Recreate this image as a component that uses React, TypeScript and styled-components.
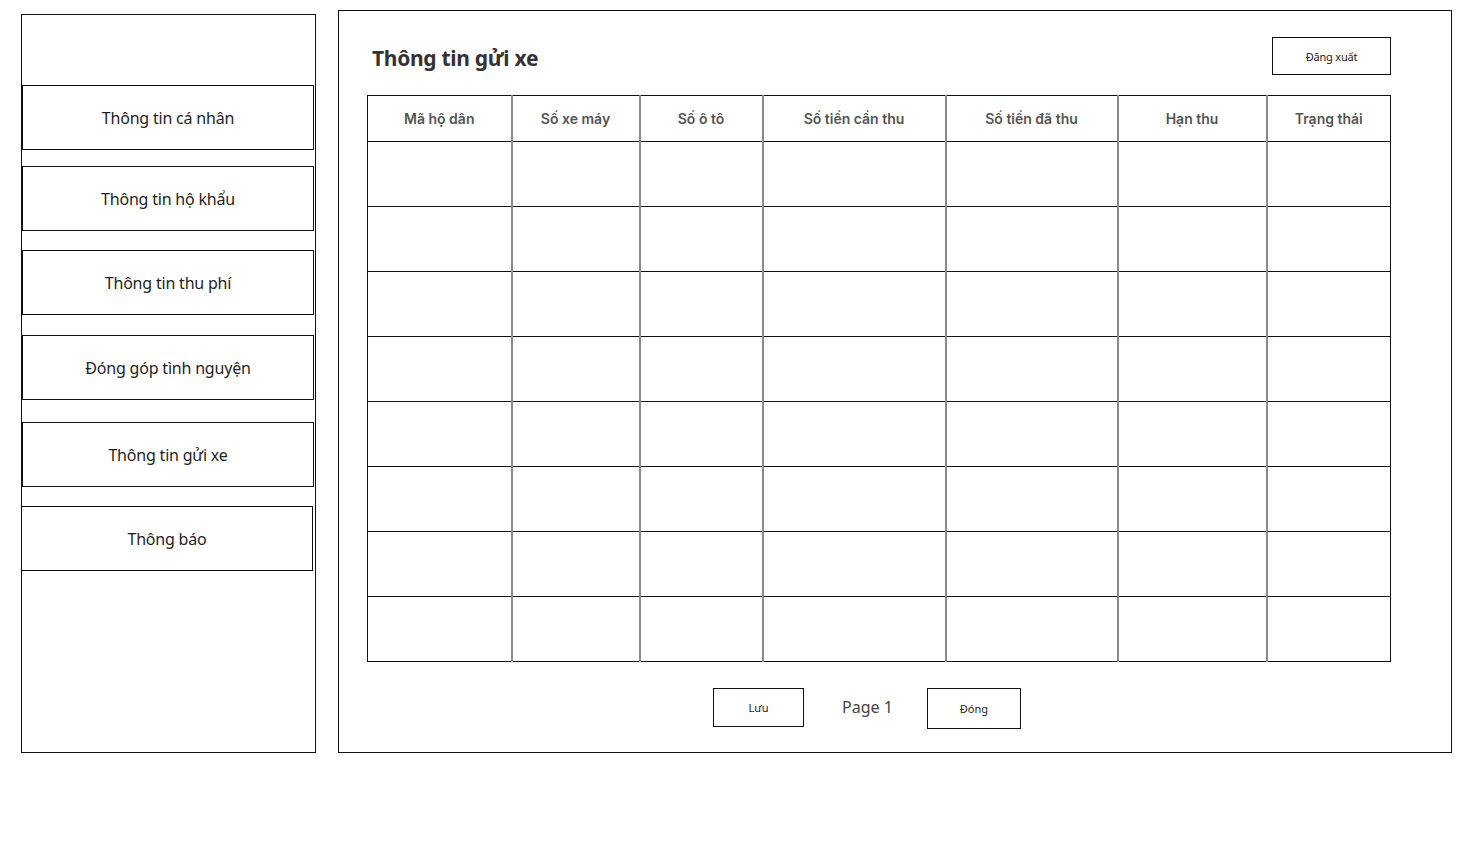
import React from 'react'
import styled, { createGlobalStyle } from 'styled-components'

const MENU = [
  { label: 'Thông tin cá nhân', top: 70, shift: 0 },
  { label: 'Thông tin hộ khẩu', top: 16, shift: 0 },
  { label: 'Thông tin thu phí', top: 19, shift: 0 },
  { label: 'Đóng góp tình nguyện', top: 20, shift: 0 },
  { label: 'Thông tin gửi xe', top: 22, shift: 0 },
  { label: 'Thông báo', top: 19, shift: -1 },
]

const COLUMNS = [
  { title: 'Mã hộ dân', width: 144 },
  { title: 'Số xe máy', width: 128 },
  { title: 'Số ô tô', width: 123 },
  { title: 'Số tiền cần thu', width: 183 },
  { title: 'Số tiền đã thu', width: 172 },
  { title: 'Hạn thu', width: 149 },
  { title: 'Trạng thái', width: 124 },
]

const ROW_COUNT = 8

export default function App() {
  return (
    <>
      <GlobalStyle />
      <Page>
        <Sidebar>
          {MENU.map((item) => (
            <MenuButton key={item.label} $top={item.top} $shift={item.shift}>
              {item.label}
            </MenuButton>
          ))}
        </Sidebar>
        <Main>
          <Header>
            <Title>Thông tin gửi xe</Title>
            <LogoutButton>Đăng xuất</LogoutButton>
          </Header>
          <Table>
            <colgroup>
              {COLUMNS.map((c) => (
                <col key={c.title} style={{ width: c.width }} />
              ))}
            </colgroup>
            <thead>
              <tr>
                {COLUMNS.map((c) => (
                  <HeadCell key={c.title}>{c.title}</HeadCell>
                ))}
              </tr>
            </thead>
            <tbody>
              {Array.from({ length: ROW_COUNT }).map((_, r) => (
                <tr key={r}>
                  {COLUMNS.map((c) => (
                    <BodyCell key={c.title} />
                  ))}
                </tr>
              ))}
            </tbody>
          </Table>
          <Footer>
            <ActionButton $width={91} $height={39}>Lưu</ActionButton>
            <PageLabel>Page 1</PageLabel>
            <ActionButton $width={94} $height={41}>Đóng</ActionButton>
          </Footer>
        </Main>
      </Page>
    </>
  )
}

const GlobalStyle = createGlobalStyle`
  html, body {
    margin: 0;
    padding: 0;
    background: #ffffff;
  }
  body {
    font-family: 'Noto Sans', 'Open Sans', sans-serif;
    color: #222;
  }
`

const Page = styled.div`
  display: flex;
  align-items: flex-start;
  gap: 22px;
  padding-left: 21px;
  width: 1477px;
  height: 852px;
  box-sizing: border-box;
`

const Sidebar = styled.nav`
  display: flex;
  flex-direction: column;
  margin-top: 14px;
  width: 295px;
  height: 739px;
  box-sizing: border-box;
  border: 1px solid #111;
`

const MenuButton = styled.div<{ $top: number; $shift: number }>`
  display: flex;
  align-items: center;
  justify-content: center;
  margin-top: ${(p) => p.$top}px;
  margin-left: ${(p) => p.$shift}px;
  width: 292px;
  height: 65px;
  box-sizing: border-box;
  border: 1px solid #111;
  font-size: 16px;
  letter-spacing: -0.2px;
  color: #1e1e1e;
`

const Main = styled.main`
  display: flex;
  flex-direction: column;
  margin-top: 10px;
  width: 1114px;
  height: 743px;
  box-sizing: border-box;
  border: 1px solid #111;
  padding: 26px 60px 0 28px;
`

const Header = styled.div`
  display: flex;
  align-items: center;
  justify-content: space-between;
  height: 38px;
  margin-bottom: 20px;
`

const Title = styled.h1`
  margin: 0 0 0 5px;
  padding-top: 3px;
  font-size: 21px;
  font-weight: 700;
  letter-spacing: -0.3px;
  color: #333;
`

const LogoutButton = styled.div`
  display: flex;
  align-items: center;
  justify-content: center;
  width: 119px;
  height: 38px;
  box-sizing: border-box;
  border: 1px solid #111;
  font-size: 11px;
  letter-spacing: -0.2px;
  color: #222;
`

const Table = styled.table`
  width: 1023px;
  table-layout: fixed;
  border-collapse: collapse;
  border: 1px solid #111;
`

const HeadCell = styled.th`
  height: 45px;
  padding: 0;
  border-bottom: 1px solid #111;
  border-left: 2px solid #8a8a8a;
  font-family: 'Inter', 'Noto Sans', sans-serif;
  font-size: 14px;
  font-weight: 600;
  color: #555;
  text-align: center;
  &:first-child {
    border-left: 1px solid #111;
  }
`

const BodyCell = styled.td`
  height: 64px;
  padding: 0;
  border-bottom: 1px solid #111;
  border-left: 2px solid #8a8a8a;
  &:first-child {
    border-left: 1px solid #111;
  }
`

const Footer = styled.div`
  display: flex;
  align-items: flex-start;
  margin-top: 26px;
  padding-left: 346px;
`

const ActionButton = styled.div<{ $width: number; $height: number }>`
  display: flex;
  align-items: center;
  justify-content: center;
  width: ${(p) => p.$width}px;
  height: ${(p) => p.$height}px;
  box-sizing: border-box;
  border: 1px solid #111;
  font-size: 11px;
  color: #222;
`

const PageLabel = styled.span`
  margin: 0 34px 0 38px;
  line-height: 39px;
  font-size: 16px;
  color: #444;
`
